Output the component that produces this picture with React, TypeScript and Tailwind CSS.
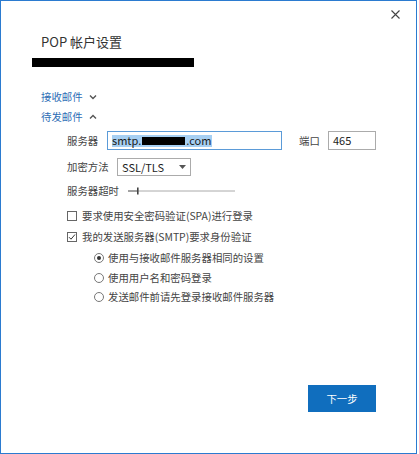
import React from "react";

const font = { fontFamily: '"Noto Sans CJK SC", "Noto Sans", sans-serif' };

function Chevron({ up }: { up?: boolean }) {
  return (
    <svg width="8" height="6" viewBox="0 0 8 6" className="ml-[6px]">
      <path
        d={up ? "M1 4.5 L4 1.5 L7 4.5" : "M1 1.5 L4 4.5 L7 1.5"}
        fill="none"
        stroke="#555"
        strokeWidth="1.4"
      />
    </svg>
  );
}

export default function App() {
  return (
    <div
      className="relative w-[417px] h-[454px] border border-[#2b7bd0] bg-white text-[10.4px] text-[#444]"
      style={font}
    >
      <button className="absolute top-[9px] right-[16px] w-[9px] h-[9px]">
        <svg width="9" height="9" viewBox="0 0 9 9">
          <path d="M0.5 0.5 L8.5 8.5 M8.5 0.5 L0.5 8.5" stroke="#444" strokeWidth="1.1" />
        </svg>
      </button>

      <div className="flex flex-col pt-[33px] pl-[40px]">
        <div className="h-[16px] leading-[16px] text-[13px] text-[#333]">POP 帐户设置</div>
        <div className="mt-[8px] ml-[-9px] w-[162px] h-[9px] bg-black" />

        <div className="mt-[22px] h-[16px] flex items-center text-[#2d6db5]">
          <span>接收邮件</span>
          <Chevron />
        </div>
        <div className="mt-[4px] h-[16px] flex items-center text-[#2d6db5]">
          <span>待发邮件</span>
          <Chevron up />
        </div>

        <div className="pl-[26px] flex flex-col">
          <div className="mt-[6px] h-[19px] flex items-center">
            <span className="w-[40px]">服务器</span>
            <div className="w-[175px] h-[19px] border border-[#5b9bd8] flex items-center pl-[4px]">
              <span className="flex items-center h-[12px] bg-[#a6cff2] text-[#1a1a1a] text-[11px] pr-[1px]">
                smtp.
                <span className="inline-block w-[43px] h-[8px] bg-black mx-[1px]" />
                .com
              </span>
            </div>
            <span className="ml-[17px] w-[29px]">端口</span>
            <div className="w-[48px] h-[19px] border border-[#ababab] flex items-center pl-[4px] text-[11px] text-[#222]">
              465
            </div>
          </div>

          <div className="mt-[8px] h-[18px] flex items-center">
            <span className="w-[50px]">加密方法</span>
            <div className="w-[74px] h-[18px] border border-[#ababab] flex items-center justify-between pl-[4px] pr-[4px] text-[11px] text-[#222]">
              <span>SSL/TLS</span>
              <svg width="7" height="4" viewBox="0 0 7 4">
                <path d="M0 0 L7 0 L3.5 4 Z" fill="#555" />
              </svg>
            </div>
          </div>

          <div className="mt-[8px] h-[14px] flex items-center">
            <span className="w-[61px]">服务器超时</span>
            <svg width="108" height="10" viewBox="0 0 108 10">
              <line x1="0" y1="5" x2="10" y2="5" stroke="#444" strokeWidth="1" />
              <line x1="10" y1="5" x2="107" y2="5" stroke="#aaa" strokeWidth="1" />
              <rect x="9" y="1.5" width="1.6" height="7" fill="#444" />
            </svg>
          </div>

          <div className="mt-[11px] h-[14px] flex items-center">
            <span className="w-[10px] h-[10px] border border-[#666] bg-white" />
            <span className="ml-[5px]">要求使用安全密码验证(SPA)进行登录</span>
          </div>
          <div className="mt-[7px] h-[14px] flex items-center">
            <span className="w-[10px] h-[10px] border border-[#666] bg-white flex items-center justify-center">
              <svg width="8" height="8" viewBox="0 0 8 8">
                <path d="M1 4.2 L3 6.2 L7 1.5" fill="none" stroke="#333" strokeWidth="1" />
              </svg>
            </span>
            <span className="ml-[5px]">我的发送服务器(SMTP)要求身份验证</span>
          </div>

          <div className="pl-[27px] flex flex-col">
            <div className="mt-[7px] h-[14px] flex items-center">
              <span className="w-[10px] h-[10px] rounded-full border border-[#777] flex items-center justify-center">
                <span className="w-[4px] h-[4px] rounded-full bg-[#333]" />
              </span>
              <span className="ml-[4px]">使用与接收邮件服务器相同的设置</span>
            </div>
            <div className="mt-[6px] h-[14px] flex items-center">
              <span className="w-[10px] h-[10px] rounded-full border border-[#777]" />
              <span className="ml-[4px]">使用用户名和密码登录</span>
            </div>
            <div className="mt-[5px] h-[14px] flex items-center">
              <span className="w-[10px] h-[10px] rounded-full border border-[#777]" />
              <span className="ml-[4px]">发送邮件前请先登录接收邮件服务器</span>
            </div>
          </div>
        </div>
      </div>

      <div className="flex justify-end pr-[40px] mt-[81px]">
        <button className="w-[68px] h-[27px] bg-[#106ebe] text-white text-[10.4px] flex items-center justify-center">
          下一步
        </button>
      </div>
    </div>
  );
}
